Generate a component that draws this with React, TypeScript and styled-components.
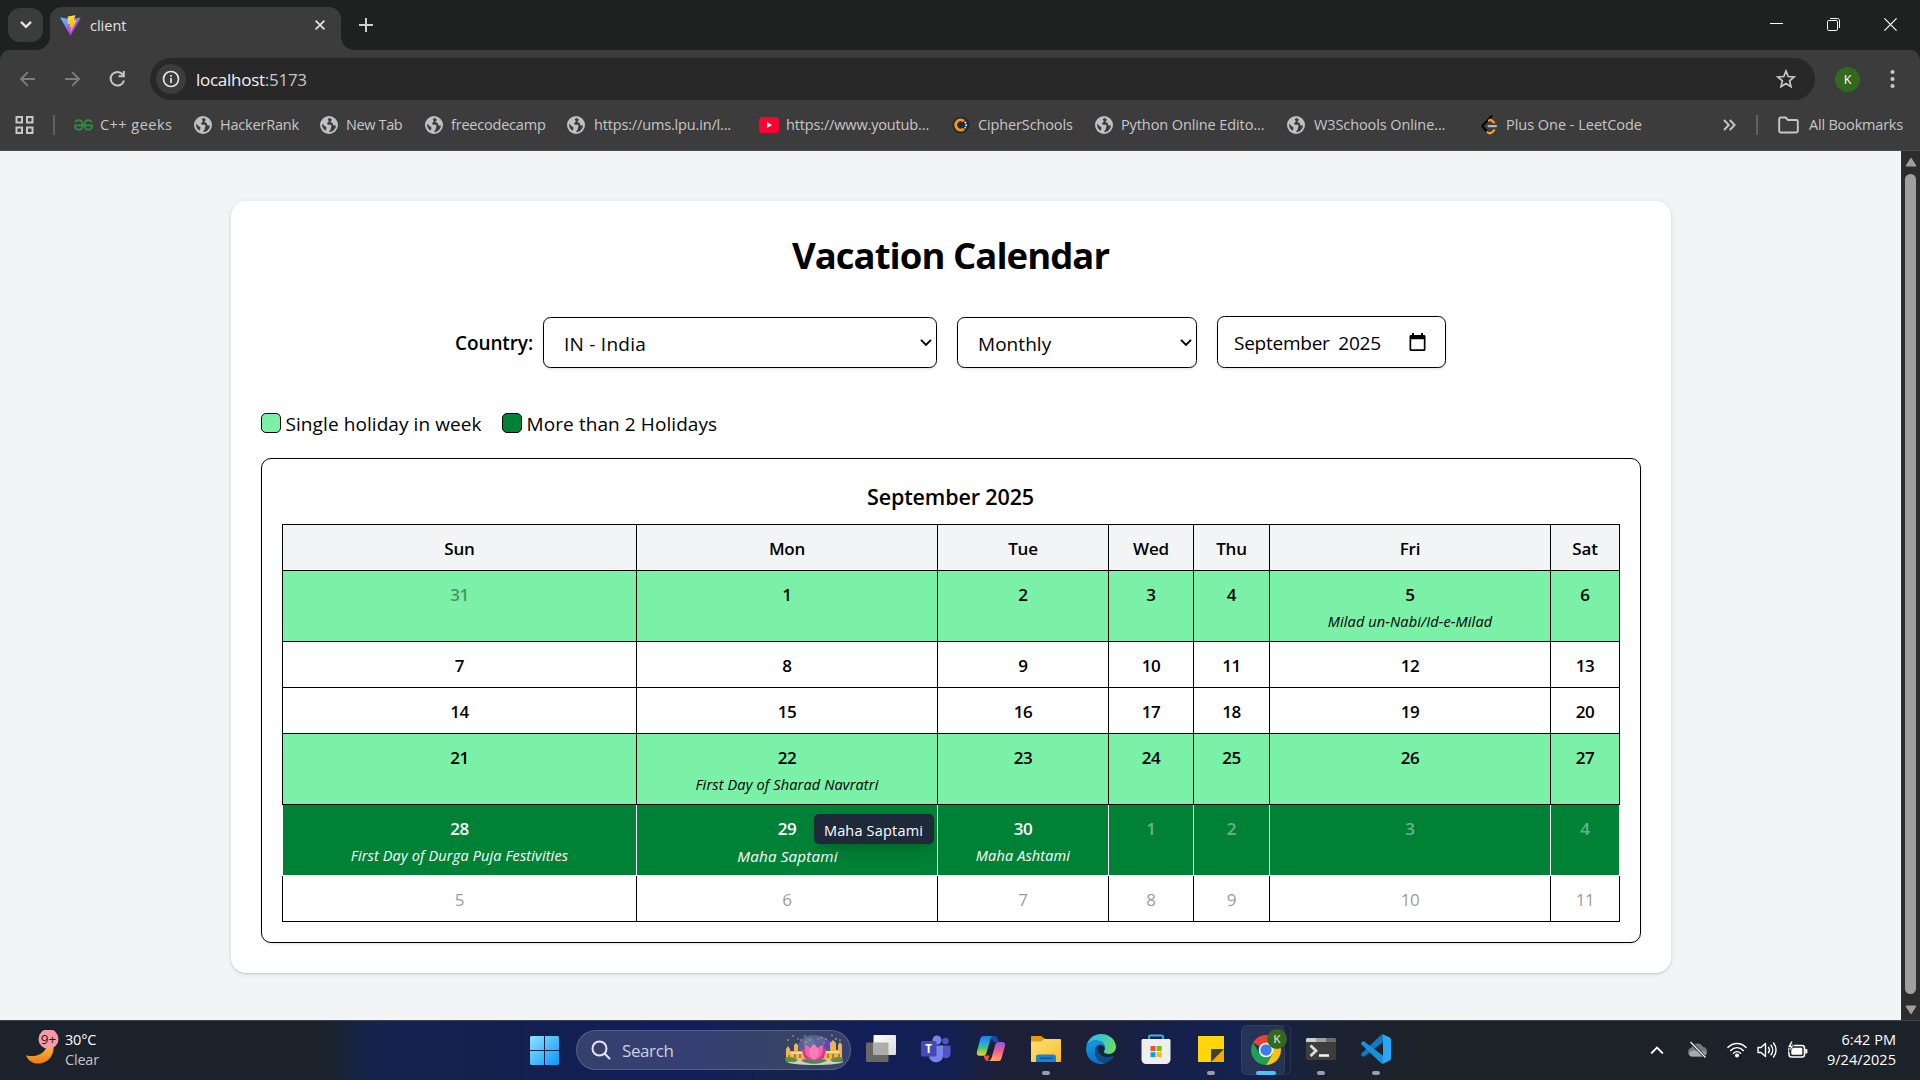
import React from "react";
import styled, { createGlobalStyle, css } from "styled-components";

const GlobalStyle = createGlobalStyle`
  *, *::before, *::after { box-sizing: border-box; }
  body { margin: 0; overflow: hidden; background: #f3f4f6; }
  svg { display: block; flex: none; }
`;

const Screen = styled.div`
  width: 1920px;
  height: 1080px;
  display: flex;
  flex-direction: column;
  overflow: hidden;
  font-family: "Open Sans", "Noto Sans", sans-serif;
  font-size: 14.5px;
`;

/* ---------- Browser chrome ---------- */

const TabStrip = styled.header`
  flex: none;
  height: 50px;
  display: flex;
  align-items: flex-end;
  padding-left: 8px;
  background: #1f2120;
`;

const TabSearch = styled.button`
  width: 35px;
  height: 34px;
  margin: 0 7px 8px 0;
  padding: 0;
  border: 0;
  border-radius: 12px;
  background: #3c3c3c;
  display: grid;
  place-items: center;
`;

const Tab = styled.div`
  position: relative;
  width: 291px;
  height: 43px;
  padding: 0 16px 7px 10px;
  border-radius: 12px 12px 0 0;
  background: #3c3c3c;
  color: #e3e3e3;
  display: flex;
  align-items: center;

  &::before,
  &::after {
    content: "";
    position: absolute;
    bottom: 0;
    width: 13px;
    height: 13px;
  }
  &::before {
    left: -13px;
    background: radial-gradient(circle at 0 0, transparent 12.5px, #3c3c3c 13px);
  }
  &::after {
    right: -13px;
    background: radial-gradient(circle at 100% 0, transparent 12.5px, #3c3c3c 13px);
  }
`;

const TabTitle = styled.span`
  flex: 1;
  margin-left: 9px;
  padding-top: 1px;
  line-height: 20px;
`;

const NewTab = styled.div`
  height: 50px;
  margin-left: 18px;
  display: flex;
  align-items: center;
`;

const WindowButtons = styled.div`
  height: 49px;
  margin: 0 1px 1px auto;
  display: grid;
  grid-template-columns: repeat(3, 57px);
  place-items: center;
`;

const ToolbarBack = styled.div`
  flex: none;
  background: #1f2120;
`;

const Chrome = styled.div`
  height: 101px;
  border-radius: 10px 10px 0 0;
  border-bottom: 1px solid #4a4a4a;
  background: #3c3c3c;
  color: #c7c7c7;
`;

const NavBar = styled.nav`
  height: 58px;
  display: flex;
  align-items: center;
  padding: 0 25px 0 18px;
`;

const NavButtons = styled.div`
  width: 132px;
  display: grid;
  grid-template-columns: 20px 20px 20px;
  column-gap: 25px;
  align-items: center;
`;

const Omnibox = styled.div`
  flex: 1;
  height: 42px;
  padding: 0 19px 0 6px;
  border-radius: 21px;
  background: #282828;
  display: flex;
  align-items: center;
`;

const SiteInfo = styled.span`
  width: 30px;
  height: 30px;
  border-radius: 50%;
  background: #3c3c3c;
  display: grid;
  place-items: center;
`;

const Url = styled.span`
  flex: 1;
  margin-left: 10px;
  padding-top: 1px;
  font-size: 17px;
  line-height: 24px;
  letter-spacing: -0.27px;
  color: #c7c7c7;

  b {
    font-weight: 400;
    color: #f1f1f1;
  }
`;

const Avatar = styled.span`
  width: 25px;
  height: 25px;
  margin: 0 30px 0 20px;
  border-radius: 50%;
  background: #33691e;
  color: #fff;
  font-size: 12.5px;
  line-height: 25px;
  text-align: center;
`;

const BookmarkBar = styled.div`
  height: 34px;
  display: flex;
  align-items: center;
  padding: 0 17px 0 15px;
`;

const Divider = styled.span`
  width: 2px;
  height: 20px;
  background: #606060;
`;

const Bookmarks = styled.div`
  display: flex;
  flex: 1;
  margin-left: 19px;
`;

const BookmarkItem = styled.span<{ $slot: number; $gap: number; $spacing: number }>`
  width: ${(p) => p.$slot}px;
  display: flex;
  align-items: center;
  gap: ${(p) => p.$gap}px;
  letter-spacing: ${(p) => p.$spacing}px;
  line-height: 20px;
  white-space: nowrap;
`;

const AllBookmarks = styled.span`
  display: flex;
  align-items: center;
  gap: 10px;
  margin-left: 20px;
  line-height: 20px;
  letter-spacing: -0.2px;
`;

/* ---------- Page ---------- */

const Viewport = styled.div`
  flex: none;
  height: 869px;
  display: flex;
`;

const Page = styled.main`
  flex: 1;
  padding-top: 50px;
  background: #f3f4f6;
  color: #000;
`;

const Card = styled.section`
  width: 1440px;
  height: 772px;
  margin: 0 auto;
  padding: 32px 30px 30px;
  border-radius: 15px;
  background: #fff;
  box-shadow: 0 1px 4px rgba(0, 0, 0, 0.1), 0 1px 2px rgba(0, 0, 0, 0.1);
`;

const Title = styled.h1`
  margin: 0 0 38px;
  font-size: 36.5px;
  line-height: 45px;
  font-weight: 700;
  letter-spacing: -0.95px;
  text-align: center;
`;

const Controls = styled.div`
  height: 52px;
  display: flex;
  justify-content: center;
  align-items: flex-end;
  gap: 20px;
  font-size: 19px;
`;

const CountryField = styled.label`
  display: flex;
  align-items: center;
  gap: 10px;
  font-weight: 600;
  letter-spacing: -0.11px;
`;

const Control = styled.span<{ $width: number; $height?: number }>`
  width: ${(p) => p.$width}px;
  height: ${(p) => p.$height ?? 51}px;
  padding: 1px 4px 0 20px;
  border: 1px solid #000;
  border-radius: 7.5px;
  background: #fff;
  box-shadow: 0 1px 3px rgba(0, 0, 0, 0.13);
  font-weight: 400;
  letter-spacing: ${(p) => (p.$width > 300 ? 0.25 : 0.05)}px;
  display: flex;
  align-items: center;
  justify-content: space-between;
`;

const MonthControl = styled(Control)`
  padding: 0 19px 0 16px;
  letter-spacing: -0.24px;
  word-spacing: 4px;
`;

const ControlText = styled.span`
  padding-top: 1px;
`;

const Legend = styled.div`
  display: flex;
  gap: 20px;
  margin-top: 43px;
  font-size: 19px;
  line-height: 27px;
  height: 25px;
  letter-spacing: 0.08px;
`;

const LegendItem = styled.span`
  display: flex;
  gap: 5px;
`;

const Swatch = styled.i<{ $color: string }>`
  width: 20px;
  height: 20px;
  margin-top: 2px;
  border: 1px solid #000;
  border-radius: 5px;
  background: ${(p) => p.$color};
`;

const MonthBox = styled.div`
  height: 485px;
  margin-top: 22px;
  padding: 20px 20px 0;
  border: 1px solid #000;
  border-radius: 10px;
  box-shadow: 0 1px 3px rgba(0, 0, 0, 0.12);
`;

const MonthTitle = styled.h2`
  margin: 0 0 10px;
  font-size: 21.5px;
  line-height: 35px;
  font-weight: 600;
  letter-spacing: -0.13px;
  text-align: center;
`;

const Grid = styled.table`
  width: 1338px;
  table-layout: fixed;
  border-collapse: collapse;
  font-size: 17px;
  line-height: 25px;
  text-align: center;
`;

const HeadCell = styled.th`
  height: 46px;
  padding: 1px 0 0 1px;
  border: 1px solid #000;
  background: #f3f4f6;
  font-weight: 600;
  letter-spacing: -0.2px;
`;

type Tone = "plain" | "light" | "dark";

const tones = {
  plain: css`
    border-color: #000;
  `,
  light: css`
    border-color: #000;
    background: #7bf1a8;
  `,
  dark: css`
    border-color: #fff;
    background: #008236;
    color: #fff;
  `,
};

const DayCell = styled.td<{ $tone: Tone; $tall: boolean }>`
  position: relative;
  height: ${(p) => (p.$tall ? 71 : 46)}px;
  padding: ${(p) => (p.$tall ? 11 : 1)}px 0 0 1px;
  vertical-align: ${(p) => (p.$tall ? "top" : "middle")};
  border: 1px solid;
  ${(p) => tones[p.$tone]}
`;

const DayNumber = styled.div<{ $outside?: boolean; $light?: boolean }>`
  font-weight: ${(p) => (p.$light ? 500 : 600)};
  letter-spacing: -0.4px;
  opacity: ${(p) => (p.$outside ? 0.4 : 1)};
`;

const Holiday = styled.div<{ $active?: boolean }>`
  margin-top: 4px;
  font-size: 14.5px;
  line-height: 21px;
  font-style: italic;
  letter-spacing: 0.14px;
  transform: ${(p) => (p.$active ? "translateY(1px) scale(1.05)" : "none")};
`;

const Tooltip = styled.span`
  position: absolute;
  top: 9px;
  left: 177px;
  width: 120px;
  height: 30px;
  border-radius: 5px;
  background: #1e2939;
  color: #fff;
  font-size: 14.5px;
  line-height: 33px;
  letter-spacing: 0.18px;
  box-shadow: 0 12px 18px -4px rgba(0, 0, 0, 0.14), 0 5px 8px -4px rgba(0, 0, 0, 0.14);
`;

const ScrollTrack = styled.aside`
  width: 19px;
  padding: 6px 0 5px;
  background: #2c2c2c;
  display: flex;
  flex-direction: column;
  align-items: center;
`;

const ScrollThumb = styled.span`
  flex: 1;
  width: 11px;
  margin: 7px 0 11px;
  border-radius: 6px;
  background: #9f9f9f;
`;

/* ---------- Taskbar ---------- */

const Taskbar = styled.footer`
  flex: none;
  height: 60px;
  padding-bottom: 1px;
  border-top: 1px solid #3a424c;
  background: linear-gradient(
    90deg,
    #1c222b 0,
    #1c222c 325px,
    #14244f 375px,
    #13204f 520px,
    #121e5c 700px,
    #14244c 780px,
    #121f58 860px,
    #131f52 950px,
    #1c2036 1000px,
    #1c2138 1090px,
    #15204a 1170px,
    #13224f 1240px,
    #1b2231 1330px,
    #1d2229 1420px,
    #1c2229 1920px
  );
  color: #fff;
  display: grid;
  grid-template-columns: 530px 1fr auto;
`;

const Weather = styled.div`
  display: flex;
  align-items: center;
  padding-left: 24px;
  gap: 5px;
`;

const TwoLines = styled.div<{ $end?: boolean; $dim?: boolean }>`
  padding-bottom: 1px;
  line-height: 20px;
  letter-spacing: ${(p) => (p.$end ? 0.05 : -0.2)}px;
  text-align: ${(p) => (p.$end ? "right" : "left")};

  div + div {
    color: ${(p) => (p.$dim ? "#c3c5c8" : "inherit")};
  }
`;

const Apps = styled.div`
  display: flex;
  align-items: center;
`;

const SearchBox = styled.div`
  width: 275px;
  height: 40px;
  margin: 0 2px 0 17px;
  padding: 0 7px 0 14px;
  border: 1px solid rgba(255, 255, 255, 0.17);
  border-radius: 20px;
  background: rgba(255, 255, 255, 0.15);
  color: #cdd1de;
  font-size: 17px;
  letter-spacing: -0.4px;
  display: flex;
  align-items: center;
`;

const SearchText = styled.span`
  flex: 1;
  margin-left: 11px;
`;

const AppSlot = styled.span`
  width: 55px;
  height: 50px;
  display: flex;
  flex-direction: column;
  align-items: center;
  justify-content: space-between;
  padding-top: 9px;
`;

const FocusedSlot = styled(AppSlot)`
  position: relative;
  width: 44px;
  margin: 0 8px 0 3px;
  padding: 0 0 0 6px;
  border-radius: 6px;
  background: rgba(255, 255, 255, 0.08);
  box-shadow: inset 0 0 0 1px rgba(255, 255, 255, 0.06);

  &::after {
    content: "";
    position: absolute;
    top: 0;
    right: -6px;
    width: 9px;
    height: 50px;
    border: 1px solid rgba(255, 255, 255, 0.09);
    border-left: 0;
    border-radius: 0 6px 6px 0;
  }

  svg {
    margin-top: 2px;
  }
`;

const Indicator = styled.i<{ $state: "none" | "open" | "focused" }>`
  width: ${(p) => (p.$state === "focused" ? 20 : 8)}px;
  height: 4px;
  border-radius: 2px;
  background: ${(p) => ({ none: "transparent", open: "#9a9ca8", focused: "#4cc2ff" })[p.$state]};
`;

const Tray = styled.div`
  display: flex;
  align-items: center;
  padding-right: 24px;
`;

const TrayIcons = styled.div`
  width: 177px;
  display: flex;
  align-items: center;

  svg:nth-child(2) { margin-left: 23px; }
  svg:nth-child(3) { margin-left: 19px; }
  svg:nth-child(4) { margin-left: 10px; }
  svg:nth-child(5) { margin-left: 9px; }
`;

/* ---------- Icons ---------- */

const Chevron = ({ size = 12, stroke = "#000", width = 2, up = false }) => (
  <svg width={size} height={size * 0.6} viewBox="0 0 12 7.2" fill="none" stroke={stroke} strokeWidth={width}>
    <path d={up ? "M1 6.4 6 1.4 11 6.4" : "M1 .9 6 5.9 11 .9"} />
  </svg>
);

const ViteIcon = () => (
  <svg width="21" height="21" viewBox="0 0 410 404">
    <defs>
      <linearGradient id="viteA" x1="6" y1="33" x2="235" y2="344" gradientUnits="userSpaceOnUse">
        <stop stopColor="#41D1FF" />
        <stop offset="1" stopColor="#BD34FE" />
      </linearGradient>
      <linearGradient id="viteB" x1="194" y1="9" x2="236" y2="293" gradientUnits="userSpaceOnUse">
        <stop stopColor="#FFEA83" />
        <stop offset=".08" stopColor="#FFDD35" />
        <stop offset="1" stopColor="#FFA800" />
      </linearGradient>
    </defs>
    <path fill="url(#viteA)" d="M399.6 59.5 215.6 388.5c-3.8 6.8-13.5 6.8-17.4.1L10.6 59.6C6.4 52.3 12.7 43.3 21 44.8L205.2 77.7c1.2.2 2.4.2 3.5 0L389.1 44.8c8.3-1.5 14.6 7.4 10.5 14.7Z" />
    <path fill="url(#viteB)" d="M293 1.6 156.8 28.3c-2.2.4-3.9 2.3-4 4.6l-8.4 141.4c-.2 3.3 2.9 5.9 6.1 5.2l37.9-8.8c3.5-.8 6.7 2.3 6 5.900l-11.300 55.100c-.8 3.700 2.700 6.900 6.400 5.800l23.400-7.100c3.600-1.100 7.100 2.100 6.400 5.800l-17.900 86.600c-1.100 5.400 6.100 8.400 9.100 3.700l2-3.100 110.900-221.400c1.900-3.700-1.300-7.900-5.400-7.200l-39 7.500c-3.700.7-6.800-2.700-5.800-6.300l25.500-88.200c1-3.600-2.100-7-5.700-6.200Z" />
  </svg>
);

const GlobeIcon = () => (
  <svg width="18" height="18" viewBox="0 0 18 18">
    <circle cx="9" cy="9" r="9" fill="#bdc1c6" />
    <path
      d="M9.2 1.900c-1.500.8-1.700 1.900-.8 2.700.9.700.2 1.500-.6 2-.9.500-.9 1.500 0 1.900 1 .400 2.600-.2 3.400.6.700.8-.1 1.700-.2 2.700-.2 1.100-.8 2.600-2 4.200 3.900 0 6.900-3 6.900-6.800-.9.500-1.900.5-2.500-.2-.6-.7-.2-1.500-.9-2.100-.6-.5-1.600 0-1.900-.9-.3-.9.900-1.300 1.300-2.300C11.200 2.500 10.100 2 9.200 1.900ZM2.100 7.700c-.4 2.700 1 5.800 3.700 7-.1-1.400.8-1.900.7-2.900-.1-1.200-1.500-1.200-2.200-2.100-.6-.7-1.300-1.500-2.200-2Z"
      fill="#3c3c3c"
    />
  </svg>
);

const GfgIcon = () => (
  <svg width="19" height="12" viewBox="0 0 19 12" fill="none" stroke="#2f8d46" strokeWidth="1.700">
    <path d="M.3 6.300h18.400M1.200 3.200C2 1.700 3.200 1.200 4.600 1.200c2.400 0 4 2 4 4.700s-1.500 4.800-4 4.800c-2.200 0-3.600-1.700-3.700-4.200M17.800 3.200c-.8-1.500-2-2-3.400-2-2.400 0-4 2-4 4.700s1.500 4.800 4 4.800c2.200 0 3.600-1.700 3.700-4.200" />
  </svg>
);

const YoutubeIcon = () => (
  <svg width="20" height="16" viewBox="0 0 20 16">
    <rect width="20" height="16" rx="3.500" fill="#ff0033" />
    <path d="m8 5 5 3-5 3Z" fill="#fff" />
  </svg>
);

const CipherIcon = () => (
  <svg width="18" height="18" viewBox="0 0 18 18" fill="none">
    <circle cx="9" cy="9" r="8.500" fill="#1f2937" />
    <path d="M12 5.200A5 5 0 1 0 12 12.800" stroke="#f79421" strokeWidth="3" />
    <path d="M12.800 5.800c1.800 1.800 1.800 4.600 0 6.400" stroke="#e8e8e8" strokeWidth="1.800" strokeDasharray="1.800 1" />
  </svg>
);

const LeetIcon = () => (
  <svg width="17" height="20" viewBox="0 0 17 20" fill="none" strokeLinecap="round" strokeWidth="2.200">
    <path d="m10.500 1.200-8 8.300c-1 1-1 2.300 0 3.300l4 4.400" stroke="#050505" />
    <path d="M8 5.500c1-.8 2-.6 2.800.1l2 1.800M6.500 17.200c1.500 1.400 3.200 1.300 4.600 0l2-2" stroke="#ffa116" />
    <path d="M7.500 11.200h7.500" stroke="#b3b3b3" />
  </svg>
);

const WindowsIcon = () => (
  <svg width="29" height="29" viewBox="0 0 29 29">
    <defs>
      <linearGradient id="win" x1="0" y1="0" x2="1" y2="1" gradientUnits="objectBoundingBox">
        <stop stopColor="#8fe3ff" />
        <stop offset="1" stopColor="#0a96fb" />
      </linearGradient>
    </defs>
    <path fill="url(#win)" d="M1 0h13v14H0V1ZM15 0h13l1 1v13H15ZM0 15h14v14H1l-1-1ZM15 15h14v13l-1 1H15Z" />
  </svg>
);

const Lotus = () => (
  <svg width="58" height="32" viewBox="0 0 58 32">
    <ellipse cx="29" cy="13" rx="16" ry="12" fill="#56618f" />
    <circle cx="24" cy="9" r="6" fill="#67749a" />
    <circle cx="35" cy="8" r="6" fill="#5b6698" />
    <ellipse cx="43" cy="11" rx="4" ry="5" fill="#5348c8" />
    <ellipse cx="30" cy="27.500" rx="28" ry="3.600" fill="#cfd0bd" />
    <path d="M1 25V15l2-3 2 3v2h4v-6l2-2 2 2v6h7v8ZM57 25V11l-2-3-2 3v5h-2V9l-3-3-3 3v9h-6v7Z" fill="#f0b34f" />
    <path d="M3 25v-4h2v4M9 24v-4h2v4M14 24v-4h2v4M42 24v-4h2v4M47 24v-4h2v4M53 24v-4h2v4" fill="#b9772a" />
    <path d="M6 18h13v2H6ZM40 17h14v2H40Z" fill="#ffd985" />
    <path d="M0 24c4-2 9-1 13 2l-3 2H1ZM58 24c-4-2-9-1-13 2l3 2h9Z" fill="#5c8f3f" />
    <path d="M16 26c8-2 18-2 26 0-5 5-21 5-26 0Z" fill="#3f8d55" />
    <path d="M17 15c4 0 7 2 9 5l1 7c-6 0-10-5-10-12ZM41 15c-4 0-7 2-9 5l-1 7c6 0 10-5 10-12Z" fill="#d93a8c" />
    <path d="M20 11c5 1 8 5 9 15-7-1-10-8-9-15ZM38 11c-5 1-8 5-9 15 7-1 10-8 9-15Z" fill="#f062ab" />
    <path d="M29 10c6 5 7 11 0 16-7-5-6-11 0-16Z" fill="#f97dbd" />
    <g fill="#ef5b63">
      <circle cx="8" cy="2" r=".9" /><circle cx="16" cy="6" r=".9" /><circle cx="33" cy="5" r=".9" /><circle cx="47" cy="1.500" r="1" /><circle cx="39" cy="9" r=".9" />
    </g>
    <g fill="#5fd2b1">
      <circle cx="13" cy="5" r=".8" /><circle cx="20" cy="2" r=".8" /><circle cx="36" cy="4" r=".8" /><circle cx="51" cy="5" r=".9" /><circle cx="25" cy="6" r=".8" />
    </g>
    <g fill="#f3c14e">
      <circle cx="3" cy="6" r=".8" /><circle cx="21" cy="8" r=".8" /><circle cx="41" cy="5" r=".8" /><circle cx="55" cy="6" r=".8" />
    </g>
  </svg>
);

const TaskViewIcon = () => (
  <svg width="30" height="30" viewBox="0 0 30 30">
    <defs>
      <linearGradient id="tv" x1="0" y1="0" x2="1" y2="1">
        <stop stopColor="#fff" />
        <stop offset="1" stopColor="#dcdcdc" />
      </linearGradient>
    </defs>
    <rect y="8.500" width="22.500" height="19.500" rx="1" fill="#676767" />
    <rect x="7.500" y="1" width="22.500" height="20" rx="1" fill="url(#tv)" />
    <path d="M7.500 8.500h15V21h-15Z" fill="#adadad" />
  </svg>
);

const TeamsIcon = () => (
  <svg width="30" height="30" viewBox="0 0 30 30">
    <circle cx="24.500" cy="7" r="3.200" fill="#4f55c4" />
    <path d="M20 11.500h9.500v8c0 5-6 6-8.500 3Z" fill="#4f55c4" />
    <circle cx="16" cy="6" r="4.500" fill="#7b83eb" />
    <path d="M8 11.500h14v10c0 9-14 9-14 0Z" fill="#7b83eb" />
    <rect y="7" width="15.500" height="15.500" rx="1.500" fill="#444ab5" />
    <text x="7.700" y="18.800" textAnchor="middle" fontSize="11.500" fontWeight="700" fill="#fff">T</text>
  </svg>
);

const CopilotIcon = () => (
  <svg width="30" height="30" viewBox="0 0 30 30">
    <defs>
      <linearGradient id="cpA" x1="0" y1="0" x2="0" y2="1">
        <stop stopColor="#1b7fe0" />
        <stop offset=".35" stopColor="#22a5e8" />
        <stop offset=".65" stopColor="#5cc56b" />
        <stop offset="1" stopColor="#f0d21c" />
      </linearGradient>
      <linearGradient id="cpB" x1=".3" y1="0" x2=".2" y2="1">
        <stop stopColor="#9a55e0" />
        <stop offset=".45" stopColor="#f0608c" />
        <stop offset="1" stopColor="#ffae5e" />
      </linearGradient>
    </defs>
    <path d="M14 2h4.500c2 0 2.800 1.200 3.300 3l1 3.200h-5Z" fill="#1a47b8" />
    <path d="M7.500 21.500h6L12 27c-2.500 0-3.200-1.500-3.700-3Z" fill="#f0532d" />
    <path d="M7.500 2h9.800c-2 .3-2.600 2-3.200 4.200l-3.600 12.500c-.5 2-1.500 3-3.500 3H3.500C.8 21.700.5 19.500 1 17.500L4.200 5C4.800 3 5.800 2 7.500 2Z" fill="url(#cpA)" />
    <path d="M22.700 27H12.200c2.300-.3 3.100-2.200 3.700-4.200l3.400-12c.5-1.800 1.600-2.800 3.500-2.800h3.500c2.500 0 3.200 2 2.600 4.200L25.600 24c-.6 2-1.400 3-2.900 3Z" fill="url(#cpB)" />
  </svg>
);

const ExplorerIcon = () => (
  <svg width="30" height="30" viewBox="0 0 30 30">
    <defs>
      <linearGradient id="ex" x1="0" y1="0" x2="1" y2="1">
        <stop stopColor="#ffe17a" />
        <stop offset="1" stopColor="#fbbd26" />
      </linearGradient>
    </defs>
    <path d="M0 3c0-.6.400-1 1-1h9c1.500 0 2 2.500 4 2.500V9H0Z" fill="#e09a0c" />
    <path d="M0 7.500h9.500c2 0 2-2.500 4-2.500H29c.6 0 1 .400 1 1v21c0 .6-.4 1-1 1H1c-.6 0-1-.4-1-1Z" fill="url(#ex)" />
    <path d="M5 28v-5c0-1.500 1-2.500 2.500-2.500h15c1.500 0 2.500 1 2.500 2.500v5Z" fill="#1583d8" />
    <path d="M8.500 24.300h13" stroke="#0a4f97" strokeWidth="1.300" />
  </svg>
);

const EdgeIcon = () => (
  <svg width="30" height="30" viewBox="0 0 30 30">
    <defs>
      <linearGradient id="edA" x1="0" y1=".3" x2="1" y2=".5">
        <stop stopColor="#2fb8ee" />
        <stop offset=".5" stopColor="#36c9c9" />
        <stop offset="1" stopColor="#6be05a" />
      </linearGradient>
      <linearGradient id="edB" x1="0" y1="0" x2=".3" y2="1">
        <stop stopColor="#1a9be0" />
        <stop offset="1" stopColor="#0b6fc4" />
      </linearGradient>
    </defs>
    <path d="M.3 12.500C1.500 5.300 7.500 0 15 0c9 0 15 6.500 15 12.800 0 4.300-3.200 7.200-7.200 7.200-3.400 0-5-1.200-5-2.200 0-.8 1.200-1.300 1.200-3.800C19 10 15 6.500 10 6.500c-4.500 0-8 2.500-9.700 6Z" fill="url(#edA)" />
    <path d="M.2 13C1.800 9 5.500 6.500 10 6.500c5 0 9 3.500 9 7.500 0 0-1.500-3.200-4.700-3.200-3.500 0-5.300 3.200-5.300 6.700C9 24 14 29 20 29c-1.500.600-3.300 1-5 1C6.500 30 .2 23.500 0 15Z" fill="url(#edB)" />
    <path d="M13.500 10.900c-3.500.7-5 4.200-4.500 7.600C9.800 24.500 14.500 29.200 20 29c3.300-1.300 6-3.400 7.600-6.200.3-.6-.2-1-.8-.7-1.300.7-2.900 1-4.600 1-5.700 0-10.200-3.700-10.200-7.900 0-1.900.4-3.300 1.500-4.300Z" fill="#114a8b" />
  </svg>
);

const StoreIcon = () => (
  <svg width="30" height="30" viewBox="0 0 30 30">
    <path d="M8 8V2.800C8 2 8.500 1.500 9.300 1.500h11.400c.8 0 1.300.5 1.300 1.300V8" fill="none" stroke="#33b5ee" strokeWidth="1.800" />
    <path d="M.5 6.500c0-.9.600-1.500 1.500-1.500h26c.9 0 1.500.6 1.500 1.500V25c0 3-2 5-5 5h-19c-3 0-5-2-5-5Z" fill="#efefef" />
    <path d="M9.500 12h5v5h-5Z" fill="#f25022" /><path d="M15.700 12h5v5h-5Z" fill="#7fba00" />
    <path d="M9.500 18.200h5v5h-5Z" fill="#00a4ef" /><path d="M15.700 18.200h5v5h-5Z" fill="#ffb900" />
  </svg>
);

const StickyIcon = () => (
  <svg width="30" height="30" viewBox="0 0 30 30">
    <path d="M2 2h26v26H2Z" fill="#ffd60a" />
    <path d="M28 15v13H15Z" fill="#f6ab05" />
    <path d="M15 28V16c0-.6.400-1 1-1h12Z" fill="#3f3f3f" />
  </svg>
);

const ChromeIcon = () => (
  <svg width="50" height="40" viewBox="0 -1 50 40">
    <g transform="translate(25 22)">
      <path d="M0 0-12.990-7.500A15 15 0 0 1 12.990-7.500Z" fill="#ea4335" />
      <path d="M0-7.500H12.990A15 15 0 0 1 0 15L6.500 3.750Z" fill="#fbc116" />
      <path d="M-12.990-7.500-6.500 3.750 0 7.500 6.500 3.750 0 15A15 15 0 0 1-12.990-7.500Z" fill="#1fa150" />
      <circle r="7.300" fill="#fff" />
      <circle r="5.700" fill="#3b7ded" />
    </g>
    <circle cx="36" cy="11" r="10" fill="#33691e" />
    <text x="36" y="15.200" textAnchor="middle" fontSize="11.500" fontWeight="600" fill="#c9d8c2">K</text>
  </svg>
);

const TerminalIcon = () => (
  <svg width="30" height="30" viewBox="0 0 30 30">
    <rect y="4" width="30" height="22" rx="1.500" fill="#3d3d3d" />
    <path d="M0 8V5.500C0 4.700.7 4 1.500 4H10v4Z" fill="#cfcfcf" />
    <path d="M10 4h10v4H10Z" fill="#a0a0a0" />
    <path d="M20 4h8.500c.8 0 1.500.7 1.500 1.500V8H20Z" fill="#6e6e6e" />
    <path d="m4.500 11.500 5.500 5.200-5.500 5.200" fill="none" stroke="#dcdcdc" strokeWidth="2.800" />
    <path d="M13 21.500h10" stroke="#f0f0f0" strokeWidth="2.600" />
  </svg>
);

const CodeIcon = () => (
  <svg width="30" height="30" viewBox="0 0 30 30">
    <path d="M22 8.300 3.200 22.500c-.5.400-1.100.4-1.600 0L.4 21.200c-.5-.5-.5-1.200 0-1.700L20 .9c.6-.6 1.300-.9 2-.7Z" fill="#0f7ac4" />
    <path d="M22 21.700 3.200 7.500c-.5-.4-1.100-.4-1.600 0L.4 8.800c-.5.500-.5 1.200 0 1.700L20 29.100c.6.600 1.300.9 2 .7Z" fill="#1a90dc" />
    <path d="M22 .2 28.300 3.200C29.400 3.700 30 4.500 30 5.700V24.300c0 1.200-.6 2-1.700 2.500L22 29.800Z" fill="#2aa6f2" />
  </svg>
);

const WeatherIcon = () => (
  <svg width="36" height="40" viewBox="0 0 36 40">
    <defs>
      <linearGradient id="moon" x1="0" y1="0" x2="0" y2="1">
        <stop stopColor="#fbc33a" />
        <stop offset="1" stopColor="#ee7a1c" />
      </linearGradient>
    </defs>
    <path d="M28.500 13c2.500 6 .5 13-5 17.500-7 5.300-18 4-21.500-5.300 9 2.700 20-.7 22-12.200Z" fill="url(#moon)" />
    <circle cx="24.500" cy="9" r="10" fill="#ff98a2" />
    <text x="24.500" y="14" textAnchor="middle" fontSize="13.500" fill="#1b1b1b">9+</text>
  </svg>
);

const TrayGlyphs = () => (
  <TrayIcons>
    <Chevron size={14} stroke="#fff" width={1.600} up />
    <svg width="21" height="18" viewBox="0 0 21 18">
      <path d="M5 15.500a4.600 4.600 0 0 1-.5-9A6.300 6.300 0 0 1 16 5.800a5 5 0 0 1 .5 9.700Z" fill="#74777c" />
      <path d="M4 15.500c-2-1-2.500-4 .5-5.500 4-1.500 7 1 11 .3 4 .2 4.500 4 1.500 5.200Z" fill="#a9abae" />
      <path d="m3.500 1 15 15.500" stroke="#1c2229" strokeWidth="3" />
      <path d="m3.500 1 15 15.500" stroke="#f2f2f2" strokeWidth="1.300" />
    </svg>
    <svg width="20" height="16" viewBox="0 0 20 16" fill="none" stroke="#fff" strokeWidth="1.400" strokeLinecap="round">
      <path d="M.9 5.500c5-5.400 13.200-5.400 18.200 0M3.700 8.500c3.500-3.800 9.100-3.800 12.600 0M6.500 11.200c2-2.100 5-2.100 7 0" />
      <circle cx="10" cy="13.500" r="1.300" fill="#fff" />
    </svg>
    <svg width="21" height="18" viewBox="0 0 21 18" fill="none" stroke="#fff" strokeWidth="1.400" strokeLinecap="round" strokeLinejoin="round">
      <path d="M1 6.500v5h3l4.500 4V2.500L4 6.500ZM11.500 6.300c1.200 1.600 1.200 3.800 0 5.400M14 4.200c2.300 2.800 2.300 6.800 0 9.600M16.500 2c3.400 4.100 3.400 9.900 0 14" />
    </svg>
    <svg width="21" height="18" viewBox="0 0 21 18">
      <rect x="2" y="4.500" width="15.500" height="11.500" rx="2.500" fill="none" stroke="#fff" strokeWidth="1.500" />
      <rect x="4.300" y="6.800" width="11" height="7" rx="1" fill="#fff" />
      <path d="M18.200 8h1.200c.6 0 1 .4 1 1v2.500c0 .6-.4 1-1 1h-1.200Z" fill="#fff" />
      <path d="M4 0 .5 6.500h2.800L2.200 11 7 4.800H4.300L6 0Z" fill="#fff" stroke="#1c2229" strokeWidth=".8" />
    </svg>
  </TrayIcons>
);

/* ---------- Data ---------- */

type Mark = { icon: React.ReactNode; text: string; slot: number; gap?: number; spacing: number };

const marks: Mark[] = [
  { icon: <GfgIcon />, text: "C++ geeks", slot: 120, gap: 7, spacing: 0.47 },
  { icon: <GlobeIcon />, text: "HackerRank", slot: 126, spacing: -0.19 },
  { icon: <GlobeIcon />, text: "New Tab", slot: 105, spacing: -0.38 },
  { icon: <GlobeIcon />, text: "freecodecamp", slot: 142, spacing: -0.21 },
  { icon: <GlobeIcon />, text: "https://ums.lpu.in/l...", slot: 192, gap: 9, spacing: -0.16 },
  { icon: <YoutubeIcon />, text: "https://www.youtub...", slot: 193, gap: 7, spacing: -0.15 },
  { icon: <CipherIcon />, text: "CipherSchools", slot: 143, spacing: -0.13 },
  { icon: <GlobeIcon />, text: "Python Online Edito...", slot: 192, spacing: -0.1 },
  { icon: <GlobeIcon />, text: "W3Schools Online...", slot: 194, gap: 9, spacing: -0.1 },
  { icon: <LeetIcon />, text: "Plus One - LeetCode", slot: 170, spacing: -0.02 },
];

type Day = [number, string?];
type Week = { tone: Tone; tall: boolean; days: Day[] };

const weeks: Week[] = [
  { tone: "light", tall: true, days: [[31], [1], [2], [3], [4], [5, "Milad un-Nabi/Id-e-Milad"], [6]] },
  { tone: "plain", tall: false, days: [[7], [8], [9], [10], [11], [12], [13]] },
  { tone: "plain", tall: false, days: [[14], [15], [16], [17], [18], [19], [20]] },
  { tone: "light", tall: true, days: [[21], [22, "First Day of Sharad Navratri"], [23], [24], [25], [26], [27]] },
  {
    tone: "dark",
    tall: true,
    days: [[28, "First Day of Durga Puja Festivities"], [29, "Maha Saptami"], [30, "Maha Ashtami"], [1], [2], [3], [4]],
  },
  { tone: "plain", tall: false, days: [[5], [6], [7], [8], [9], [10], [11]] },
];

const columns = [
  { name: "Sun", width: 354 },
  { name: "Mon", width: 301 },
  { name: "Tue", width: 171 },
  { name: "Wed", width: 85 },
  { name: "Thu", width: 76 },
  { name: "Fri", width: 281 },
  { name: "Sat", width: 69 },
];

const isOutside = (week: number, day: number) => (week === 0 && day > 20) || (week > 3 && day < 20);

type AppEntry = { name: string; icon: React.ReactNode; state: "none" | "open" | "focused" };

const apps: AppEntry[] = [
  { name: "taskview", icon: <TaskViewIcon />, state: "none" },
  { name: "teams", icon: <TeamsIcon />, state: "none" },
  { name: "copilot", icon: <CopilotIcon />, state: "none" },
  { name: "explorer", icon: <ExplorerIcon />, state: "open" },
  { name: "edge", icon: <EdgeIcon />, state: "none" },
  { name: "store", icon: <StoreIcon />, state: "none" },
  { name: "sticky", icon: <StickyIcon />, state: "open" },
  { name: "chrome", icon: <ChromeIcon />, state: "focused" },
  { name: "terminal", icon: <TerminalIcon />, state: "open" },
  { name: "code", icon: <CodeIcon />, state: "open" },
];

/* ---------- Sections ---------- */

const BrowserChrome = () => (
  <>
    <TabStrip>
      <TabSearch><Chevron size={12} stroke="#e3e3e3" width={2.300} /></TabSearch>
      <Tab>
        <ViteIcon />
        <TabTitle>client</TabTitle>
        <svg width="10" height="10" viewBox="0 0 10 10" stroke="#e3e3e3" strokeWidth="1.700">
          <path d="m.6.600 8.800 8.800M9.400.600.6 9.400" />
        </svg>
      </Tab>
      <NewTab>
        <svg width="14" height="14" viewBox="0 0 14 14" stroke="#d0d0d0" strokeWidth="2"><path d="M7 0v14M0 7h14" /></svg>
      </NewTab>
      <WindowButtons>
        <svg width="13" height="13" viewBox="0 0 13 13" stroke="#fff"><path d="M0 5.500h13" /></svg>
        <svg width="13" height="13" viewBox="0 0 13 13" fill="none" stroke="#fff">
          <rect x=".5" y="2.500" width="10" height="10" rx="1.200" />
          <path d="M3 .5h7.500c1.200 0 2 .8 2 2V10" />
        </svg>
        <svg width="13" height="13" viewBox="0 0 13 13" stroke="#fff" strokeWidth="1.200"><path d="m.4.400 12.200 12.200M12.600.400.4 12.600" /></svg>
      </WindowButtons>
    </TabStrip>
    <ToolbarBack>
      <Chrome>
        <NavBar>
          <NavButtons>
            <svg width="20" height="18" viewBox="0 0 20 18" fill="none" stroke="#7d7d7d" strokeWidth="1.900"><path d="M17 9H3.500M9.800 2.200 3 9l6.800 6.800" /></svg>
            <svg width="20" height="18" viewBox="0 0 20 18" fill="none" stroke="#7d7d7d" strokeWidth="1.900"><path d="M2 9h13.500M9.200 2.200 16 9l-6.800 6.800" /></svg>
            <svg width="20" height="18" viewBox="0 0 20 18" fill="none" stroke="#c7c7c7" strokeWidth="2">
              <path d="M15 4.800A6.800 6.800 0 1 0 16 10.500" />
              <path d="M15.800 1v5.300H10.500" />
            </svg>
          </NavButtons>
          <Omnibox>
            <SiteInfo>
              <svg width="18" height="18" viewBox="0 0 18 18" fill="none" stroke="#e3e3e3" strokeWidth="1.700">
                <circle cx="9" cy="9" r="7.500" /><path d="M9 8v5M9 5v1.700" />
              </svg>
            </SiteInfo>
            <Url><b>localhost</b>:5173</Url>
            <svg width="20" height="20" viewBox="0 0 20 20" fill="none" stroke="#c7c7c7" strokeWidth="1.700">
              <path d="m10 2 2.200 5.500 5.900.5-4.500 3.900 1.400 5.700-5-3.100-5 3.100 1.400-5.700L1.900 8l5.900-.5Z" />
            </svg>
          </Omnibox>
          <Avatar>K</Avatar>
          <svg width="5" height="20" viewBox="0 0 5 20" fill="#c7c7c7">
            <circle cx="2.500" cy="3" r="2.100" /><circle cx="2.500" cy="10" r="2.100" /><circle cx="2.500" cy="17" r="2.100" />
          </svg>
        </NavBar>
        <BookmarkBar>
          <svg width="38" height="18" viewBox="0 0 38 18" fill="none" stroke="#c7c7c7" strokeWidth="2">
            <path d="M1.500 1H7v5.500H1.500ZM12 1h5.500v5.500H12ZM1.500 11.500H7V17H1.500ZM12 11.500h5.500V17H12Z" />
          </svg>
          <Divider />
          <Bookmarks>
            {marks.map((m) => (
              <BookmarkItem key={m.text} $slot={m.slot} $gap={m.gap ?? 8} $spacing={m.spacing}>
                {m.icon}
                {m.text}
              </BookmarkItem>
            ))}
          </Bookmarks>
          <svg width="33" height="12" viewBox="0 0 33 12" fill="none" stroke="#c7c7c7" strokeWidth="1.900"><path d="m1 1 4.800 5L1 11M6.800 1l4.800 5-4.800 5" /></svg>
          <Divider />
          <AllBookmarks>
            <svg width="21" height="18" viewBox="0 0 21 18" fill="none" stroke="#c7c7c7" strokeWidth="1.900" strokeLinejoin="round">
              <path d="M1.200 3c0-.8.600-1.500 1.500-1.500h5L10 4h8.300c.9 0 1.500.7 1.500 1.500V15c0 .8-.6 1.500-1.500 1.500H2.700c-.9 0-1.500-.7-1.500-1.500Z" />
            </svg>
            All Bookmarks
          </AllBookmarks>
        </BookmarkBar>
      </Chrome>
    </ToolbarBack>
  </>
);

const Calendar = () => (
  <Grid>
    <colgroup>
      {columns.map((c) => (
        <col key={c.name} width={c.width} />
      ))}
    </colgroup>
    <thead>
      <tr>
        {columns.map((c) => (
          <HeadCell key={c.name}>{c.name}</HeadCell>
        ))}
      </tr>
    </thead>
    <tbody>
      {weeks.map((week, w) => (
        <tr key={w}>
          {week.days.map(([day, holiday]) => (
            <DayCell key={day} $tone={week.tone} $tall={week.tall}>
              <DayNumber $outside={isOutside(w, day)} $light={w === 5}>{day}</DayNumber>
              {holiday && <Holiday $active={day === 29}>{holiday}</Holiday>}
              {day === 29 && <Tooltip>Maha Saptami</Tooltip>}
            </DayCell>
          ))}
        </tr>
      ))}
    </tbody>
  </Grid>
);

export default function App() {
  return (
    <Screen>
      <GlobalStyle />
      <BrowserChrome />
      <Viewport>
        <Page>
          <Card>
            <Title>Vacation Calendar</Title>
            <Controls>
              <CountryField>
                Country:
                <Control $width={394}><ControlText>IN - India</ControlText><Chevron /></Control>
              </CountryField>
              <Control $width={240}><ControlText>Monthly</ControlText><Chevron /></Control>
              <MonthControl $width={229} $height={52}>
                <ControlText>September 2025</ControlText>
                <svg width="17" height="18" viewBox="0 0 17 18">
                  <path d="M3 0h2v2h7V0h2v2h1c1 0 1.500.6 1.500 1.500v13c0 .9-.5 1.500-1.500 1.500H2C1 18 .5 17.400.5 16.500v-13C.5 2.600 1 2 2 2h1Zm-.8 6.200v10.100h12.600V6.200Z" />
                </svg>
              </MonthControl>
            </Controls>
            <Legend>
              <LegendItem><Swatch $color="#7bf1a8" />Single holiday in week</LegendItem>
              <LegendItem><Swatch $color="#008236" />More than 2 Holidays</LegendItem>
            </Legend>
            <MonthBox>
              <MonthTitle>September 2025</MonthTitle>
              <Calendar />
            </MonthBox>
          </Card>
        </Page>
        <ScrollTrack>
          <svg width="12" height="10" viewBox="0 0 12 10" fill="#9f9f9f" stroke="#9f9f9f" strokeLinejoin="round"><path d="m6 1 5 8H1Z" /></svg>
          <ScrollThumb />
          <svg width="12" height="10" viewBox="0 0 12 10" fill="#9f9f9f" stroke="#9f9f9f" strokeLinejoin="round"><path d="m6 9 5-8H1Z" /></svg>
        </ScrollTrack>
      </Viewport>
      <Taskbar>
        <Weather>
          <WeatherIcon />
          <TwoLines $dim><div>30°C</div><div>Clear</div></TwoLines>
        </Weather>
        <Apps>
          <WindowsIcon />
          <SearchBox>
            <svg width="20" height="20" viewBox="0 0 20 20" fill="none" stroke="#e4e6ee" strokeWidth="2" strokeLinecap="round">
              <circle cx="8.500" cy="8.500" r="7" /><path d="m13.800 13.800 4.700 4.700" />
            </svg>
            <SearchText>Search</SearchText>
            <Lotus />
          </SearchBox>
          {apps.map((a) => {
            const Slot = a.state === "focused" ? FocusedSlot : AppSlot;
            return (
              <Slot key={a.name}>
                {a.icon}
                <Indicator $state={a.state} />
              </Slot>
            );
          })}
        </Apps>
        <Tray>
          <TrayGlyphs />
          <TwoLines $end><div>6:42 PM</div><div>9/24/2025</div></TwoLines>
        </Tray>
      </Taskbar>
    </Screen>
  );
}
